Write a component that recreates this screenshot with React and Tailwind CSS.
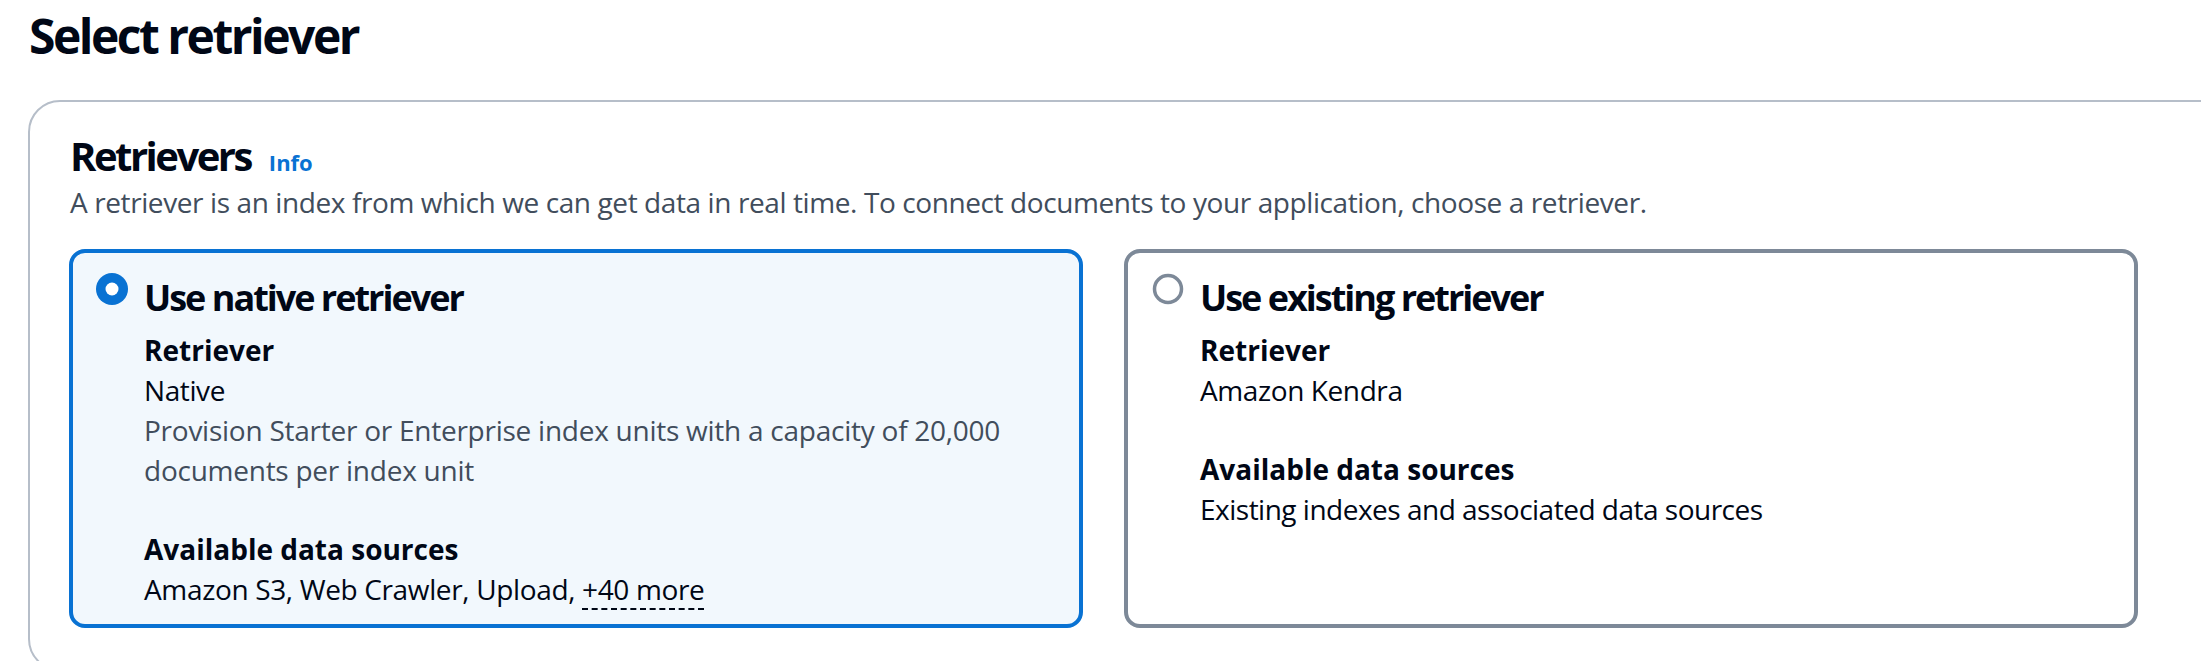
function Radio({ checked }) {
  if (checked) {
    return (
      <svg width="32" height="32" viewBox="0 0 32 32" className="shrink-0">
        <circle cx="16" cy="16" r="16" fill="#0972d3" />
        <circle cx="16" cy="16" r="6.5" fill="#ffffff" />
      </svg>
    );
  }
  return (
    <svg width="32" height="32" viewBox="0 0 32 32" className="shrink-0">
      <circle cx="16" cy="16" r="13.5" fill="#ffffff" stroke="#7d8998" strokeWidth="3.5" />
    </svg>
  );
}

function Tile({ checked, title, children }) {
  return (
    <div
      className={
        checked
          ? "rounded-[16px] border-4 border-[#0972d3] bg-[#f2f8fd] pl-[23px] pr-[23px] pt-[20px] pb-[15px]"
          : "rounded-[16px] border-4 border-[#7d8998] bg-white pl-[24px] pr-[23px] pt-[20px] pb-[15px]"
      }
    >
      <div className="flex items-start">
        <Radio checked={checked} />
        <div className="ml-[16px] pt-[3px]">
          <div className="text-[36px] leading-[44px] font-bold tracking-[-2px] text-[#000716]">
            {title}
          </div>
          <div className="mt-[10px] text-[28px] leading-[40px] text-[#000716]">{children}</div>
        </div>
      </div>
    </div>
  );
}

export default function App() {
  return (
    <div
      className="w-[2201px] h-[661px] overflow-hidden bg-white"
      style={{ fontFamily: '"Open Sans", "Noto Sans", sans-serif' }}
    >
      <h1 className="pl-[29px] pt-[8px] text-[48px] leading-[56px] font-bold tracking-[-2.5px] text-[#000716]">
        Select retriever
      </h1>

      <div className="mt-[36px] ml-[28px] w-[2300px] h-[571px] rounded-l-[32px] border-2 border-[#b6bec9] pl-[39px] pt-[30px]">
        <div className="flex items-baseline">
          <h2 className="pl-[1px] text-[40px] leading-[48px] font-bold tracking-[-2.5px] text-[#000716]">
            Retrievers
          </h2>
          <a className="ml-[18px] text-[22px] font-bold text-[#0972d3]">Info</a>
        </div>
        <p className="mt-[2px] pl-[1px] text-[28px] leading-[40px] tracking-[-0.4px] text-[#414d5c]">
          A retriever is an index from which we can get data in real time. To connect documents
          to your application, choose a retriever.
        </p>

        <div className="mt-[27px] grid grid-cols-[1014px_1014px] gap-[41px]">
          <Tile checked title="Use native retriever">
            <div className="font-bold">Retriever</div>
            <div className="tracking-[-0.4px]">Native</div>
            <div className="tracking-[-0.25px] text-[#414d5c]">
              Provision Starter or Enterprise index units with a capacity of 20,000
              <br />
              documents per index unit
            </div>
            <div className="mt-[39px] font-bold">Available data sources</div>
            <div className="tracking-[-0.35px]">
              Amazon S3, Web Crawler, Upload,{" "}
              <span className="border-b-2 border-dashed border-[#000716]">+40 more</span>
            </div>
          </Tile>
          <Tile title="Use existing retriever">
            <div className="font-bold">Retriever</div>
            <div className="tracking-[-0.4px]">Amazon Kendra</div>
            <div className="mt-[39px] font-bold">Available data sources</div>
            <div className="tracking-[-0.5px]">Existing indexes and associated data sources</div>
          </Tile>
        </div>
      </div>
    </div>
  );
}
